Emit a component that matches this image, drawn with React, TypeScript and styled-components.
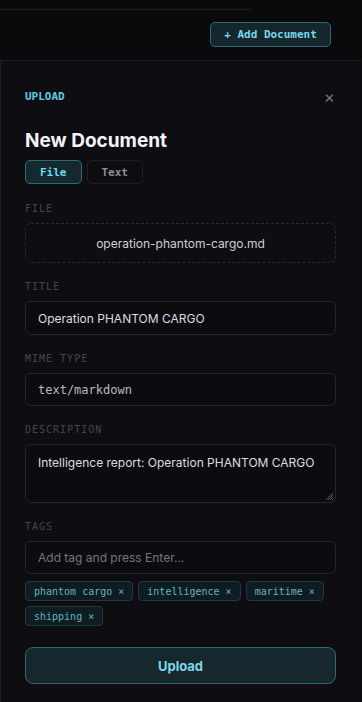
import React from "react";
import styled, { createGlobalStyle } from "styled-components";

const GlobalStyle = createGlobalStyle`
  html, body {
    margin: 0;
    padding: 0;
    background: #0a0a0d;
  }
  * { box-sizing: border-box; }
`;

const mono = `"DejaVu Sans Mono", "Liberation Mono", monospace`;
const sans = `Inter, "Noto Sans", sans-serif`;

const tags = ["phantom cargo", "intelligence", "maritime", "shipping"];

const App = () => {
    return (
        <Page>
            <GlobalStyle />
            <TopRule />
            <Toolbar>
                <AddButton>+ Add Document</AddButton>
            </Toolbar>
            <Panel>
                <Header>
                    <Eyebrow>UPLOAD</Eyebrow>
                    <Close>×</Close>
                </Header>
                <Title>New Document</Title>
                <Tabs>
                    <Tab active>File</Tab>
                    <Tab>Text</Tab>
                </Tabs>
                <Fields>
                    <Field>
                        <Label>FILE</Label>
                        <DropZone>operation-phantom-cargo.md</DropZone>
                    </Field>
                    <Field>
                        <Label>TITLE</Label>
                        <Input h={34}>Operation PHANTOM CARGO</Input>
                    </Field>
                    <Field>
                        <Label>MIME TYPE</Label>
                        <Input mono>text/markdown</Input>
                    </Field>
                    <Field>
                        <Label>DESCRIPTION</Label>
                        <TextArea>
                            Intelligence report: Operation PHANTOM CARGO
                            <Grip width="9" height="9" viewBox="0 0 9 9">
                                <path d="M8 1L1 8M8 3L3 8M8 5L5 8M8 7L7 8" stroke="#55555c" strokeWidth="1" />
                            </Grip>
                        </TextArea>
                    </Field>
                    <Field>
                        <Label>TAGS</Label>
                        <Input placeholder>Add tag and press Enter...</Input>
                        <Chips>
                            {tags.map((t) => (
                                <Chip key={t}>{t} ×</Chip>
                            ))}
                        </Chips>
                    </Field>
                </Fields>
                <UploadButton>Upload</UploadButton>
            </Panel>
        </Page>
    );
}

const Page = styled.div`
  width: 362px;
  height: 702px;
  overflow: hidden;
  background: #0a0a0d;
  display: flex;
  flex-direction: column;
`;

const TopRule = styled.div`
  width: 251px;
  height: 10px;
  border-bottom: 1px solid #1d1d22;
`;

const Toolbar = styled.div`
  display: flex;
  justify-content: flex-end;
  padding: 12px 31px 0 0;
  height: 50px;
`;

const AddButton = styled.div`
  height: 25px;
  width: 121px;
  border: 1px solid #2b6b74;
  border-radius: 5px;
  background: #15262c;
  color: #72d9ea;
  font-family: ${mono};
  font-size: 11px;
  font-weight: bold;
  display: flex;
  align-items: center;
  justify-content: center;
`;

const Panel = styled.div`
  width: 361px;
  flex: 1;
  background: #0e0e12;
  border-top: 1px solid #1c1c21;
  border-left: 1px solid #1c1c21;
  padding: 27px 25px 0 24px;
  display: flex;
  flex-direction: column;
`;

const Header = styled.div`
  display: flex;
  align-items: center;
  justify-content: space-between;
  height: 16px;
  padding-right: 1px;
`;

const Eyebrow = styled.div`
  font-family: ${mono};
  font-size: 11px;
  font-weight: bold;
  color: #5ccbe0;
`;

const Close = styled.div`
  font-family: ${sans};
  font-size: 17px;
  color: #77777d;
  line-height: 16px;
  margin-top: 2px;
`;

const Title = styled.div`
  margin-top: 25px;
  font-family: ${sans};
  font-size: 19px;
  font-weight: 700;
  line-height: 24px;
  color: #f4f4f6;
`;

const Tabs = styled.div`
  display: flex;
  gap: 5px;
  margin-top: 7px;
`;

const Tab = styled.div<{ active?: boolean }>`
  height: 24px;
  padding: 0 14px 0 14px;
  border-radius: 5px;
  border: 1px solid ${(p) => (p.active ? "#2e6a73" : "#1f1f25")};
  background: ${(p) => (p.active ? "#14282e" : "#0d0d11")};
  color: ${(p) => (p.active ? "#6dd8ea" : "#8d8d92")};
  font-family: ${mono};
  font-size: 11px;
  font-weight: bold;
  display: flex;
  align-items: center;
`;

const Fields = styled.div`
  margin-top: 19px;
  display: flex;
  flex-direction: column;
  gap: 18px;
`;

const Field = styled.div`
  display: flex;
  flex-direction: column;
`;

const Label = styled.div`
  font-family: ${mono};
  font-size: 10px;
  letter-spacing: 1px;
  line-height: 12px;
  color: #45454c;
  margin-bottom: 8px;
`;

const DropZone = styled.div`
  height: 40px;
  border: 1px dashed #2a2a30;
  border-radius: 6px;
  display: flex;
  align-items: center;
  justify-content: center;
  font-family: ${sans};
  font-size: 12px;
  color: #cfcfd3;
`;

const Input = styled.div<{ mono?: boolean; placeholder?: boolean; h?: number }>`
  height: ${(p) => p.h ?? 33}px;
  border: 1px solid #25252b;
  border-radius: 6px;
  background: #0c0c10;
  padding: 0 12px;
  display: flex;
  align-items: center;
  font-family: ${(p) => (p.mono ? mono : sans)};
  font-size: 12px;
  color: ${(p) => (p.placeholder ? "#76767c" : p.mono ? "#b9b9be" : "#dcdce0")};
`;

const TextArea = styled.div`
  position: relative;
  height: 59px;
  border: 1px solid #25252b;
  border-radius: 6px;
  background: #0c0c10;
  padding: 10px 12px;
  font-family: ${sans};
  font-size: 12px;
  line-height: 16px;
  color: #dcdce0;
`;

const Grip = styled.svg`
  position: absolute;
  right: 1px;
  bottom: 1px;
`;

const Chips = styled.div`
  display: flex;
  flex-wrap: wrap;
  gap: 5px;
  margin-top: 7px;
`;

const Chip = styled.div`
  height: 20px;
  padding: 0 8px;
  border: 1px solid #1f3a40;
  border-radius: 4px;
  background: #0f1c21;
  color: #5fb6c4;
  font-family: ${mono};
  font-size: 10px;
  display: flex;
  align-items: center;
`;

const UploadButton = styled.div`
  margin-top: 21px;
  height: 37px;
  border: 1px solid #2e6a73;
  border-radius: 8px;
  background: #16272d;
  color: #7ad9ea;
  font-family: ${sans};
  font-size: 13px;
  font-weight: 700;
  display: flex;
  align-items: center;
  justify-content: center;
`;

export default App;
